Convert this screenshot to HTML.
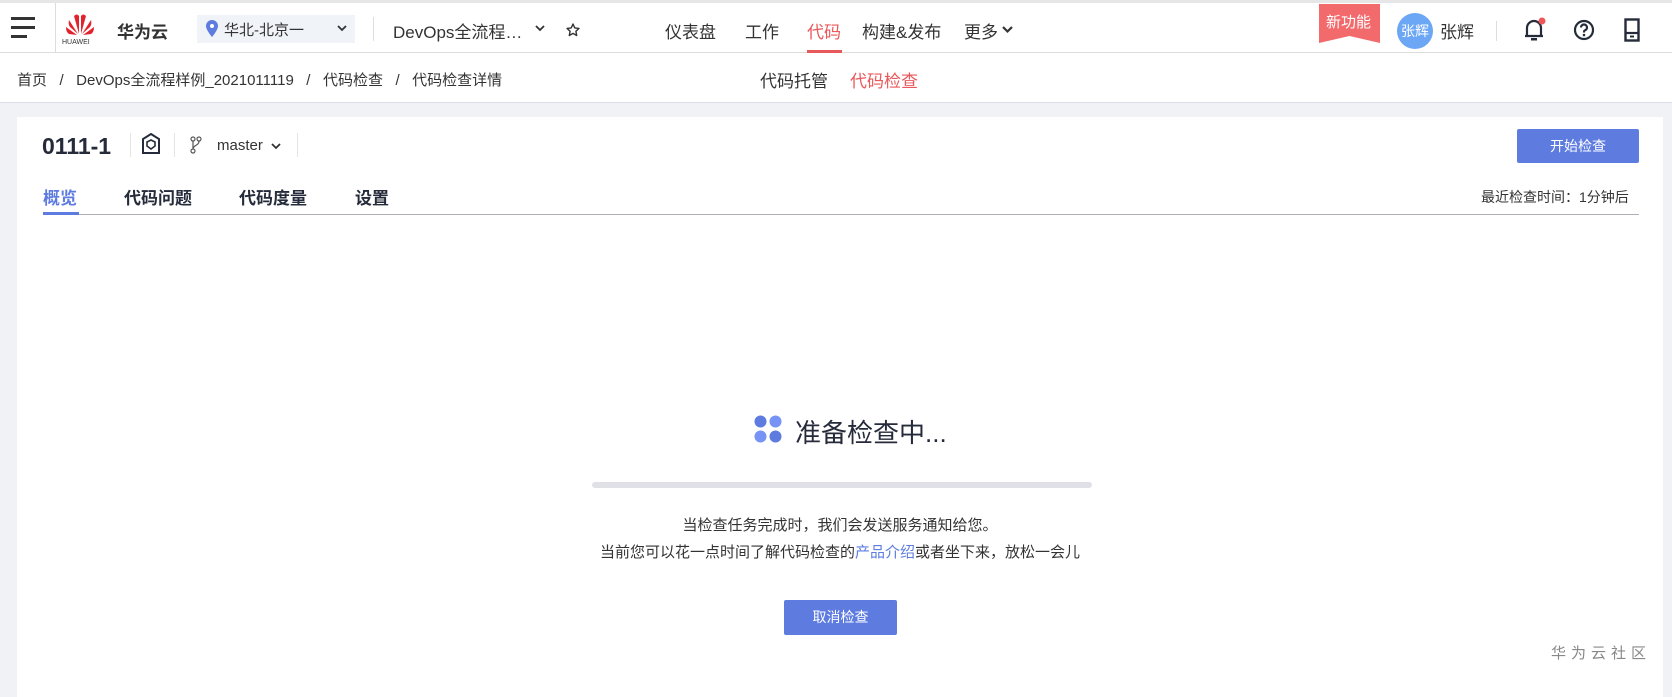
<!DOCTYPE html>
<html><head><meta charset="utf-8"><style>
*{margin:0;padding:0;box-sizing:border-box}
body{width:1672px;height:678px;overflow:hidden;background:#f0f2f5;font-family:"Liberation Sans","Noto Sans CJK SC",sans-serif;color:#252b3a;position:relative}
.abs{position:absolute;white-space:nowrap}
#top{position:absolute;left:0;top:0;width:1672px;height:53px;background:#fff;border-top:3px solid #e6e6e6;border-bottom:1px solid #dcdcdc}
#sub{position:absolute;left:0;top:53px;width:1672px;height:50px;background:#fff;border-bottom:1px solid #dcdfe6}
#card{position:absolute;left:17px;top:117px;width:1646px;height:580px;background:#fff}
.nav{font-size:17px;color:#333;top:17px}
.btn{position:absolute;background:#5e7ce0;color:#fff;font-size:14px;text-align:center;border-radius:2px}
</style></head><body>
<div id="top">
 <div class="abs" style="left:11px;top:14px;width:24px;height:3px;background:#333"></div>
 <div class="abs" style="left:11px;top:23px;width:24px;height:3px;background:#333"></div>
 <div class="abs" style="left:11px;top:32px;width:16px;height:3px;background:#333"></div>
 <div class="abs" style="left:55px;top:0;width:1px;height:50px;background:#dcdcdc"></div>
 <svg class="abs" style="left:64px;top:9px" width="32" height="24" viewBox="0 0 32 24"><g fill="#e3222b"><path d="M15 22 L10 4 Q13 1 15 4Z"/><path d="M17 22 L22 4 Q19 1 17 4Z"/><path d="M14 22 L5 8 Q4 12 6 15Z"/><path d="M18 22 L27 8 Q28 12 26 15Z"/><path d="M13 23 L2 15 Q2 20 5 22Z"/><path d="M19 23 L30 15 Q30 20 27 22Z"/></g></svg>
 <div class="abs" style="left:62px;top:36px;font-size:7px;color:#333">HUAWEI</div>
 <div class="abs" style="left:117px;top:15px;font-size:17px;font-weight:bold;color:#333">华为云</div>
 <div class="abs" style="left:197px;top:12px;width:158px;height:28px;background:#f0f3f8"></div>
 <svg class="abs" style="left:206px;top:17px" width="12" height="17" viewBox="0 0 12 17"><path d="M6 0C2.7 0 0 2.6 0 6c0 4 6 11 6 11s6-7 6-11c0-3.4-2.7-6-6-6z" fill="#5e7ce0"/><circle cx="6" cy="6" r="2" fill="#fff"/></svg>
 <div class="abs" style="left:224px;top:16px;font-size:15px;color:#333">华北-北京一</div>
 <svg class="abs" style="left:337px;top:22px" width="10" height="7"><path d="M1 1l4 4 4-4" stroke="#333" stroke-width="1.8" fill="none"/></svg>
 <div class="abs" style="left:373px;top:14px;width:1px;height:24px;background:#ddd"></div>
 <div class="abs" style="left:393px;top:15px;font-size:17px;color:#333">DevOps全流程…</div>
 <svg class="abs" style="left:535px;top:22px" width="10" height="7"><path d="M1 1l4 4 4-4" stroke="#333" stroke-width="1.8" fill="none"/></svg>
 <svg class="abs" style="left:566px;top:20px" width="14" height="14" viewBox="0 0 14 14"><path d="M7 1l1.8 3.9 4.2.5-3.1 2.9.8 4.2L7 10.4 3.3 12.5l.8-4.2L1 5.4l4.2-.5z" stroke="#333" stroke-width="1.4" fill="none" stroke-linejoin="round"/></svg>
 <div class="abs nav" style="left:665px;top:15px">仪表盘</div>
 <div class="abs nav" style="left:745px;top:15px">工作</div>
 <div class="abs nav" style="left:807px;top:15px;color:#e9585b">代码</div>
 <div class="abs" style="left:807px;top:47px;width:35px;height:3px;background:#e9585b"></div>
 <div class="abs nav" style="left:862px;top:15px">构建&amp;发布</div>
 <div class="abs nav" style="left:964px;top:15px">更多</div>
 <svg class="abs" style="left:1002px;top:23px" width="11" height="8"><path d="M1 1l4.5 4.5L10 1" stroke="#333" stroke-width="2.2" fill="none"/></svg>
 <svg class="abs" style="left:1319px;top:1px" width="61" height="39"><path d="M0 0H61V39L30.5 32L0 39Z" fill="#f26a6c"/></svg>
 <div class="abs" style="left:1326px;top:8px;font-size:15px;color:#fff">新功能</div>
 <div class="abs" style="left:1397px;top:10px;width:36px;height:36px;border-radius:50%;background:#6ba7f5;color:#fff;font-size:14px;line-height:36px;text-align:center">张辉</div>
 <div class="abs" style="left:1440px;top:15px;font-size:17px;color:#333">张辉</div>
 <div class="abs" style="left:1496px;top:18px;width:1px;height:20px;background:#ddd"></div>
 <svg class="abs" style="left:1522px;top:14px" width="24" height="26" viewBox="0 0 24 26"><path d="M5 19V11a7 7 0 0 1 14 0v8H5zM3 19h18" stroke="#252b3a" stroke-width="2.2" fill="none"/><rect x="9" y="21" width="6" height="2.5" fill="#252b3a"/><circle cx="20" cy="4" r="3.5" fill="#f0575a"/></svg>
 <svg class="abs" style="left:1573px;top:16px" width="22" height="22" viewBox="0 0 22 22"><circle cx="11" cy="11" r="9" stroke="#252b3a" stroke-width="2.2" fill="none"/><path d="M8 8.5a3 3 0 1 1 4 2.8c-1 .4-1 1-1 2.2" stroke="#252b3a" stroke-width="2.2" fill="none"/><circle cx="11" cy="16" r="1.3" fill="#252b3a"/></svg>
 <svg class="abs" style="left:1624px;top:15px" width="16" height="24" viewBox="0 0 16 24"><rect x="1.5" y="1.5" width="13" height="21" stroke="#252b3a" stroke-width="2.4" fill="none"/><path d="M1.5 15h13" stroke="#252b3a" stroke-width="2.2"/><path d="M6 18.5h4" stroke="#252b3a" stroke-width="2"/></svg>
</div>
<div id="sub">
 <div class="abs" style="left:17px;top:16px;font-size:15px;color:#333">首页 &nbsp;&nbsp;/&nbsp;&nbsp; DevOps全流程样例_2021011119 &nbsp;&nbsp;/&nbsp;&nbsp; 代码检查 &nbsp;&nbsp;/&nbsp;&nbsp; 代码检查详情</div>
 <div class="abs" style="left:760px;top:14px;font-size:17px;color:#333">代码托管</div>
 <div class="abs" style="left:850px;top:14px;font-size:17px;color:#e9585b">代码检查</div>
</div>
<div id="card">
 <div class="abs" style="left:25px;top:16px;font-size:23px;font-weight:bold;color:#252b3a">0111-1</div>
 <div class="abs" style="left:113px;top:16px;width:1px;height:24px;background:#e4e4e4"></div>
 <svg class="abs" style="left:124px;top:16px" width="20" height="22" viewBox="0 0 20 22"><path d="M10 1L18 6v14H2V6z" stroke="#252b3a" stroke-width="2" fill="none"/><path d="M10 7l4 2v4l-4 3-4-3V9z" stroke="#252b3a" stroke-width="1.6" fill="none"/></svg>
 <div class="abs" style="left:157px;top:16px;width:1px;height:24px;background:#e4e4e4"></div>
 <svg class="abs" style="left:173px;top:19px" width="12" height="18" viewBox="0 0 12 18"><g stroke="#555" stroke-width="1.2" fill="none"><circle cx="3" cy="3" r="2"/><circle cx="9" cy="3" r="2"/><circle cx="3" cy="15" r="2"/><path d="M3 5v8M9 5c0 5-6 4-6 8"/></g></svg>
 <div class="abs" style="left:200px;top:20px;font-size:15px;color:#333">master</div>
 <svg class="abs" style="left:254px;top:26px" width="10" height="7"><path d="M1 1l4 4 4-4" stroke="#333" stroke-width="1.8" fill="none"/></svg>
 <div class="abs" style="left:280px;top:16px;width:1px;height:24px;background:#e4e4e4"></div>
 <div class="btn" style="left:1500px;top:12px;width:122px;height:34px;line-height:34px">开始检查</div>
 <div class="abs" style="left:26px;top:67px;font-size:17px;font-weight:bold;color:#5e7ce0">概览</div>
 <div class="abs" style="left:107px;top:67px;font-size:17px;font-weight:bold;color:#252b3a">代码问题</div>
 <div class="abs" style="left:222px;top:67px;font-size:17px;font-weight:bold;color:#252b3a">代码度量</div>
 <div class="abs" style="left:338px;top:67px;font-size:17px;font-weight:bold;color:#252b3a">设置</div>
 <div class="abs" style="left:1464px;top:70px;font-size:14px;color:#333">最近检查时间：1分钟后</div>
 <div class="abs" style="left:26px;top:97px;width:1596px;height:1px;background:#adb0b8"></div>
 <div class="abs" style="left:26px;top:95px;width:36px;height:3px;background:#5e7ce0"></div>
 <svg class="abs" style="left:737px;top:298px" width="28" height="28"><circle cx="6.5" cy="6.5" r="6" fill="#5e7ce0"/><circle cx="21.5" cy="6.5" r="6" fill="#7693f5"/><circle cx="6.5" cy="21.5" r="6" fill="#7693f5"/><circle cx="21.5" cy="21.5" r="6" fill="#5e7ce0"/></svg>
 <div class="abs" style="left:778px;top:296px;font-size:26px;color:#252b3a">准备检查中...</div>
 <div class="abs" style="left:575px;top:365px;width:500px;height:6px;border-radius:3px;background:#dfe1e6"></div>
 <div class="abs" style="left:0;width:1646px;text-align:center;top:397px;font-size:15px;color:#333">当检查任务完成时，我们会发送服务通知给您。</div>
 <div class="abs" style="left:0;width:1646px;text-align:center;top:424px;font-size:15px;color:#333">当前您可以花一点时间了解代码检查的<span style="color:#5e7ce0">产品介绍</span>或者坐下来，放松一会儿</div>
 <div class="btn" style="left:767px;top:483px;width:113px;height:35px;line-height:35px">取消检查</div>
 <div class="abs" style="left:1534px;top:525px;font-size:15px;color:#888;letter-spacing:5px">华为云社区</div>
</div>
</body></html>
